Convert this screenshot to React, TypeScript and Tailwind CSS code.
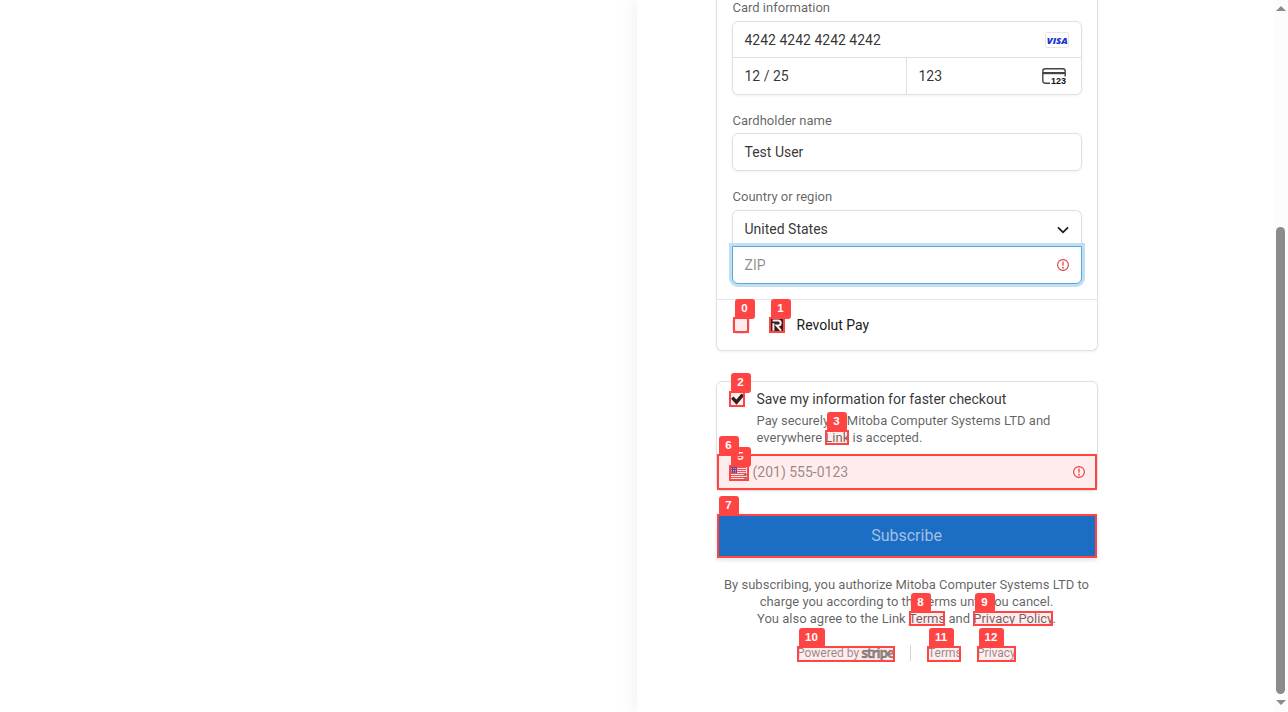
import React from "react";

const field = "border border-[#e0e0e0] bg-white shadow-[0_1px_3px_rgba(0,0,0,0.06)]";
const label = "pl-[0.5px] text-[13px] leading-[17px] text-[#1a1a1ab3]";

function Visa() {
  return (
    <svg width="24" height="16" viewBox="0 0 24 16" className="block">
      <rect x="0.5" y="0.5" width="23" height="15" rx="1" fill="#fff" stroke="#e6e6e6" />
      <text x="1.8" y="11.7" fontFamily="Open Sans, sans-serif" fontWeight="800" fontStyle="italic" fontSize="9.4" textLength="21" lengthAdjust="spacingAndGlyphs" fill="#1434cb">VISA</text>
    </svg>
  );
}

function CvcCard() {
  return (
    <svg width="24" height="17" viewBox="0 0 24 17" className="block">
      <path d="M8 15.3H3.2A2.4 2.4 0 0 1 .8 12.9V3.2A2.4 2.4 0 0 1 3.2.8h17.6a2.4 2.4 0 0 1 2.4 2.4V8.5" fill="none" stroke="#444" strokeWidth="1.4" />
      <rect x="1" y="4" width="22" height="2.2" fill="#444" />
      <text x="9" y="16.2" fontFamily="Liberation Sans, sans-serif" fontWeight="700" fontSize="9" textLength="15" lengthAdjust="spacingAndGlyphs" fill="#111">123</text>
    </svg>
  );
}

function ErrorIcon() {
  return (
    <svg width="12" height="12" viewBox="0 0 12 12" className="block">
      <circle cx="6" cy="6" r="5.4" fill="none" stroke="#df3b41" strokeWidth="1.1" />
      <path d="M6 2.4v4.4" stroke="#df3b41" strokeWidth="1.2" />
      <path d="M6 8v1.5" stroke="#df3b41" strokeWidth="1.5" />
    </svg>
  );
}

function Flag() {
  return (
    <svg width="20" height="16" viewBox="0 0 20 16" className="block">
      <g transform="translate(0 2)">
        <rect width="16" height="12" fill="#fff" />
        {[0, 2, 4, 6, 8, 10].map((y) => (
          <rect key={y} y={y} width="16" height="1" fill="#e0606a" />
        ))}
        <rect width="7" height="6" fill="#4a4a94" />
        <path d="M1 1.5h5M1 3.5h5M1 5h5" stroke="#d4cfe6" strokeWidth=".8" strokeDasharray="1 1" />
      </g>
      <path d="M13 10.5l2.5-3 2.5 3zM13 12l2.5 3 2.5-3z" fill="#6b6b6b" fillOpacity=".85" />
    </svg>
  );
}

type Mark = { n: number; x: number; y: number; w: number; h: number; bw?: number; clear?: boolean };

const marks: Mark[] = [
  { n: 0, x: 733, y: 317, w: 16, h: 16 },
  { n: 1, x: 769, y: 317, w: 16, h: 16 },
  { n: 2, x: 729, y: 391, w: 16, h: 16 },
  { n: 3, x: 825, y: 430, w: 24, h: 15 },
  { n: 5, x: 729, y: 465, w: 20, h: 16 },
  { n: 6, x: 717, y: 454, w: 380, h: 36 },
  { n: 7, x: 717, y: 514, w: 380, h: 44, clear: true },
  { n: 8, x: 909, y: 611, w: 36, h: 15 },
  { n: 9, x: 973, y: 611, w: 80, h: 15 },
  { n: 10, x: 797, y: 646, w: 98, h: 16, bw: 26 },
  { n: 11, x: 927, y: 646, w: 34, h: 16, bw: 25 },
  { n: 12, x: 977, y: 646, w: 39, h: 16, bw: 25 },
];

function Marks() {
  return (
    <div className="pointer-events-none absolute inset-0">
      {marks.map((m) => (
        <React.Fragment key={m.n}>
          <div
            className={"absolute border-2 border-[#ff4444] " + (m.clear ? "" : "bg-[#ff4444]/10")}
            style={{ left: m.x, top: m.y, width: m.w, height: m.h }}
          />
          <div
            className="absolute h-5 rounded-[3px] bg-[#ff4444] pr-px text-center font-['Liberation_Sans',sans-serif] text-[11.5px] leading-[19px] font-bold text-white"
            style={{ left: m.x + 2, top: m.y - 18, width: m.bw ?? 20 }}
          >
            {m.n}
          </div>
        </React.Fragment>
      ))}
    </div>
  );
}

export default function App() {
  return (
    <div className="relative flex h-[712px] w-[1288px] overflow-hidden bg-white font-[Roboto,sans-serif] text-[14px] text-[#1a1a1ae6]">
      <div className="w-[637px] shrink-0" />
      <main className="flex w-[637px] shrink-0 flex-col pl-[79px] shadow-[-7px_0_14px_rgba(0,0,0,0.04)]">
        <section className="h-[351px] w-[382px] rounded-b-[6px] border border-t-0 border-[#e0e0e0] shadow-[0_1px_3px_rgba(0,0,0,0.06)]">
          <div className="flex h-[299px] flex-col px-[15px]">
            <div className={label + " -mt-px h-[22px]"}>Card information</div>
            <div className={field + " flex h-[74px] flex-col rounded-[6px]"}>
              <div className="flex h-9 items-center justify-between border-b border-[#e0e0e0] pr-3 pl-[11.5px]">
                <span className="pt-[2px]">4242 4242 4242 4242</span>
                <Visa />
              </div>
              <div className="flex flex-1">
                <div className="flex w-[174px] items-center border-r border-[#e0e0e0] pl-[11.5px]">12 / 25</div>
                <div className="flex flex-1 items-center justify-between pr-[15px] pl-[11.5px]">
                  <span>123</span>
                  <CvcCard />
                </div>
              </div>
            </div>
            <div className={label + " mt-[17px] h-[21px]"}>Cardholder name</div>
            <div className={field + " flex h-[38px] items-center rounded-[6px] pl-[11.5px]"}>Test User</div>
            <div className={label + " mt-[17px] h-[22px]"}>Country or region</div>
            <div className={field + " flex h-[36px] items-center justify-between rounded-t-[6px] border-b-0 pr-3 pl-[11.5px]"}>
              <span className="pt-[2px]">United States</span>
              <svg width="12" height="8" viewBox="0 0 12 8" className="mt-[2px]"><path d="M1 1.3l5 5 5-5" fill="none" stroke="#1a1a1a" strokeWidth="1.8" /></svg>
            </div>
            <div className="flex h-[38px] items-center justify-between rounded-b-[6px] border border-[#58a8dc] bg-white pr-3 pl-[11.5px] text-[#1a1a1a80] shadow-[0_0_0_3px_#c1dff2]">
              <span>ZIP</span>
              <ErrorIcon />
            </div>
          </div>
          <div className="flex h-[51px] items-center border-t border-[#e6e6e6] pl-4">
            <div className="h-4 w-4 rounded-[5px] border-2 border-[#e0e0e0] bg-white shadow-[0_0_0_1px_#e0e0e0]" />
            <svg width="16" height="16" viewBox="0 0 16 16" className="ml-5">
              <rect width="16" height="16" rx="2" fill="#191c1f" />
              <path d="M4.4 6.2v7.6M3.6 3.4h5.6a2.5 2.5 0 0 1 0 5H7.6L12 13.6" fill="none" stroke="#fff" strokeWidth="2" />
            </svg>
            <span className="ml-[11.5px] text-[#1a1a1a]">Revolut Pay</span>
          </div>
        </section>

        <section className="mt-[30px] h-[110px] w-[382px] rounded-[6px] border border-[#e0e0e0] shadow-[0_1px_3px_rgba(0,0,0,0.06)]">
          <div className="flex h-[72px] pt-2 pl-3">
            <svg width="16" height="16" viewBox="0 0 16 16" className="mt-[1px] shrink-0">
              <path d="M3.3 6.6l4.2 4.6L13.8 3.6" fill="none" stroke="#1a1a1a" strokeWidth="3.4" />
            </svg>
            <div className="pl-[11.5px]">
              <div className="text-[14px] leading-[18px]">Save my information for faster checkout</div>
              <div className="mt-1 text-[13px] leading-[17px] whitespace-nowrap text-[#1a1a1ab3]">
                Pay securely at Mitoba Computer Systems LTD and<br />everywhere Link is accepted.
              </div>
            </div>
          </div>
          <div className="flex h-9 items-center border-t border-[#e0e0e0] pr-3 pl-[13px] text-[#1a1a1a80]">
            <Flag />
            <span className="ml-[2.5px] flex-1">(201) 555-0123</span>
            <div className="pb-px"><ErrorIcon /></div>
          </div>
        </section>

        <button className="mt-[23px] ml-px h-11 w-[380px] self-start bg-[#1b6ec4] pr-px text-center text-[16px] leading-[42px] text-[#a3bfe2] shadow-[0_2px_5px_rgba(0,0,0,0.12)]">
          Subscribe
        </button>

        <div className="mt-[18px] w-[381px] text-center text-[13px] leading-[17px] whitespace-nowrap text-[#1a1a1ab3]">
          By subscribing, you authorize Mitoba Computer Systems LTD to<br />
          charge you according to the terms until you cancel.<br />
          You also agree to the Link <u>Terms</u> and <u>Privacy Policy</u>.
        </div>

        <footer className="mt-[18px] flex h-4 items-center pl-[81px] text-[12px] text-[#1a1a1a80]">
          <div className="flex w-[113px] items-center whitespace-nowrap">
            Powered by<span className="ml-[2px] font-['Open_Sans',sans-serif] text-[13.5px] leading-4 font-bold tracking-[-1.1px] [-webkit-text-stroke:0.4px]">stripe</span>
          </div>
          <div className="h-4 w-px bg-[#d4d4d4]" />
          <span className="ml-[17px] w-[49px]">Terms</span>
          <span>Privacy</span>
        </footer>
      </main>

      <div className="flex w-[14px] flex-col items-center justify-between bg-[#fcfcfc] pt-[6px] pb-[7px]">
        <svg width="10" height="5" viewBox="0 0 10 5" className="mr-px"><path d="M0 5L5 0l5 5z" fill="#8b8b8b" /></svg>
        <div className="flex-1 pt-[216px] pr-px pb-[6px]">
          <div className="h-full w-[9px] rounded-full bg-[#8b8b8b]" />
        </div>
        <svg width="10" height="5" viewBox="0 0 10 5" className="mr-px"><path d="M0 0l5 5 5-5z" fill="#8b8b8b" /></svg>
      </div>
      <Marks />
    </div>
  );
}
